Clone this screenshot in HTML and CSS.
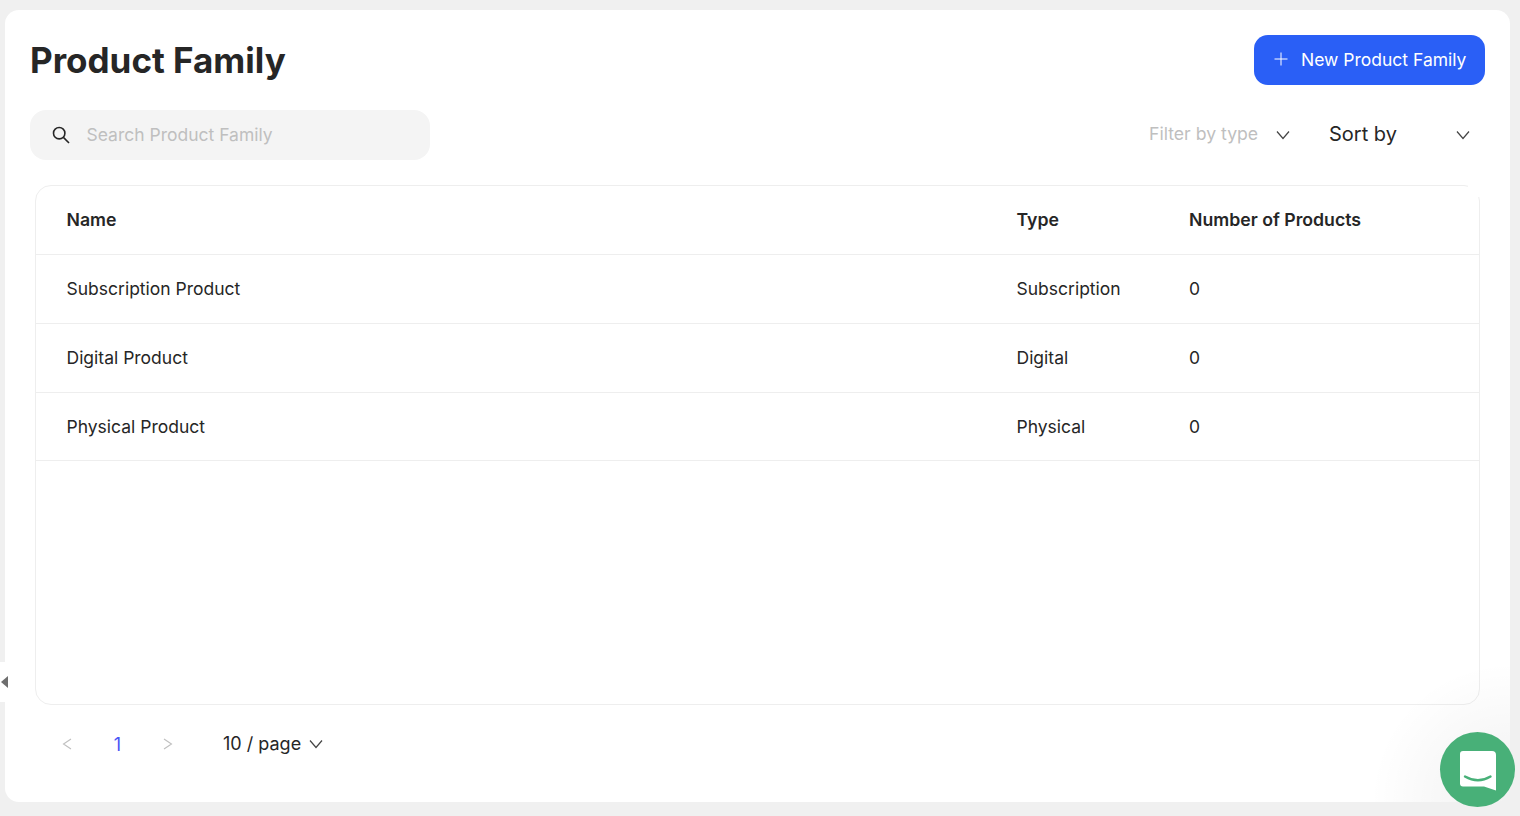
FILE: index.html
```html
<!DOCTYPE html>
<html lang="en">
<head>
<meta charset="utf-8">
<title>Product Family</title>
<link rel="stylesheet" href="styles.css">
</head>
<body>
<main class="card">
  <header class="top">
    <h1 class="title">Product Family</h1>
    <button class="new-btn" type="button">
      <svg class="plus" width="14" height="14" viewBox="0 0 14 14"><path d="M7 0.5V13.5M0.5 7H13.5" stroke="#fff" stroke-width="1" fill="none"/></svg>
      <span>New Product Family</span>
    </button>
  </header>
  <div class="tools">
    <div class="search">
      <svg class="search-icon" width="20" height="20" viewBox="0 0 20 20"><circle cx="8.2" cy="8.2" r="5.7" stroke="#262626" stroke-width="1.6" fill="none"/><path d="M12.4 12.4L18 18" stroke="#262626" stroke-width="1.6" fill="none"/></svg>
      <span class="placeholder">Search Product Family</span>
    </div>
    <div class="filters">
      <div class="select filter">
        <span class="select-label">Filter by type</span>
        <svg class="chev" width="14" height="10" viewBox="0 0 14 10"><path d="M1 1.5L7 8.5L13 1.5" stroke="#444" stroke-width="1.2" fill="none"/></svg>
      </div>
      <div class="select sort">
        <span class="select-label">Sort by</span>
        <svg class="chev" width="14" height="10" viewBox="0 0 14 10"><path d="M1 1.5L7 8.5L13 1.5" stroke="#444" stroke-width="1.2" fill="none"/></svg>
      </div>
    </div>
  </div>
  <section class="table-wrap">
    <span class="corner"></span>
    <div class="row head">
      <div>Name</div><div>Type</div><div>Number of Products</div>
    </div>
    <div class="row"><div>Subscription Product</div><div>Subscription</div><div>0</div></div>
    <div class="row"><div>Digital Product</div><div>Digital</div><div>0</div></div>
    <div class="row last"><div>Physical Product</div><div>Physical</div><div>0</div></div>
  </section>
  <nav class="pager">
    <svg class="arrow" width="10" height="12" viewBox="0 0 10 12"><path d="M9 1L1.5 6L9 11" stroke="#bfbfbf" stroke-width="1.1" fill="none"/></svg>
    <span class="page-num">1</span>
    <svg class="arrow next" width="10" height="12" viewBox="0 0 10 12"><path d="M1 1L8.5 6L1 11" stroke="#bfbfbf" stroke-width="1.1" fill="none"/></svg>
    <span class="per-page">10 / page</span>
    <svg class="chev" width="14" height="10" viewBox="0 0 14 10"><path d="M1 1.5L7 8.5L13 1.5" stroke="#444" stroke-width="1.2" fill="none"/></svg>
  </nav>
</main>
<div class="sidebar-toggle"><span class="tri"></span></div>
<div class="glow"></div>
<div class="launcher">
  <svg width="36" height="40" viewBox="0 0 36 40"><path d="M3 0H32Q36 0 36 4V39.500L24 35.500H3Q0 35.500 0 32.500V3Q0 0 3 0Z" fill="#fff"/><path d="M5 25.500Q18 33 30.500 25.500" stroke="#48b078" stroke-width="2.400" stroke-linecap="round" fill="none"/></svg>
</div>
</body>
</html>
```
FILE: styles.css
```css
* { box-sizing: border-box; }
html, body { height: 100%; }
body {
  margin: 0;
  padding: 10px 10px 14px 5px;
  background: #f0f0f0;
  font-family: Inter, "Liberation Sans", sans-serif;
  color: #262626;
  overflow: hidden;
}
.card {
  height: 792px;
  background: #fff;
  border-radius: 14px;
  padding: 25px 25px 0;
  display: flex;
  flex-direction: column;
}
.top {
  display: flex;
  justify-content: space-between;
  align-items: center;
  height: 50px;
}
.title {
  margin: 0;
  font-size: 35px;
  font-weight: 700;
  line-height: 50px;
  color: #262626;
}
.new-btn {
  height: 50px;
  width: 231px;
  border: 0;
  border-radius: 14px;
  background: #2a5ff6;
  color: #fff;
  font: 400 17.500px Inter, "Liberation Sans", sans-serif;
  display: flex;
  align-items: center;
  gap: 13px;
  padding: 0 0 2px 20px;
}
.tools {
  margin-top: 25px;
  height: 50px;
  display: flex;
  justify-content: space-between;
  align-items: center;
}
.search {
  width: 400px;
  height: 50px;
  background: #f4f4f4;
  border-radius: 16px;
  display: flex;
  align-items: center;
  padding-left: 21px;
  gap: 15.500px;
}
.placeholder { font-size: 17.500px; color: #bfbfbf; padding-bottom: 1px; }
.filters { display: flex; align-items: center; margin-right: 15px; }
.select { display: flex; align-items: center; justify-content: space-between; width: 141px; }
.select-label { padding-bottom: 3px; }
.filter { font-size: 17.650px; color: #bfbfbf; margin-right: 39px; }
.sort { font-size: 20px; color: #262626; }
.table-wrap {
  position: relative;
  margin: 25px 5px 0;
  height: 520px;
  border: 1px solid #eee;
  border-radius: 16px;
}
.corner {
  position: absolute;
  top: -1px;
  right: -1px;
  width: 12px;
  height: 12px;
  background: #fff;
}
.row {
  display: grid;
  grid-template-columns: 950px 172.500px 1fr;
  align-items: center;
  height: 69px;
  padding: 0 0 1px 30.500px;
  border-bottom: 1px solid #eee;
  font-size: 17.500px;
  color: #262626;
}
.row.last { height: 68px; }
.row.head { font-size: 17.700px; font-weight: 600; }
.pager {
  display: flex;
  align-items: center;
  height: 78px;
  padding-left: 32px;
}
.page-num { width: 10px; margin-left: 40.500px; color: #4a55f5; font-size: 18px; text-align: center; }
.arrow.next { margin-left: 40.500px; }
.per-page { margin-left: 50px; margin-right: 8px; padding-bottom: 1px; font-size: 18px; color: #262626; }
.sidebar-toggle {
  position: absolute;
  left: 0;
  top: 662px;
  width: 8px;
  height: 40px;
  background: #fff;
  display: flex;
  align-items: center;
}
.tri {
  width: 0;
  height: 0;
  margin-left: 1px;
  border-style: solid;
  border-width: 6px 7px 6px 0;
  border-color: transparent #6e6e6e transparent transparent;
}
.glow {
  position: absolute;
  left: 1370px;
  top: 662px;
  width: 140px;
  height: 140px;
  border-bottom-right-radius: 14px;
  background: radial-gradient(circle 140px at 100% 100%, rgba(0,0,0,.06), rgba(0,0,0,0) 100%);
  pointer-events: none;
}
.launcher {
  position: absolute;
  left: 1440px;
  top: 732px;
  width: 75px;
  height: 75px;
  border-radius: 50%;
  background: #48b078;
  display: flex;
  align-items: center;
  justify-content: center;
  padding-top: 3px;
}
```
